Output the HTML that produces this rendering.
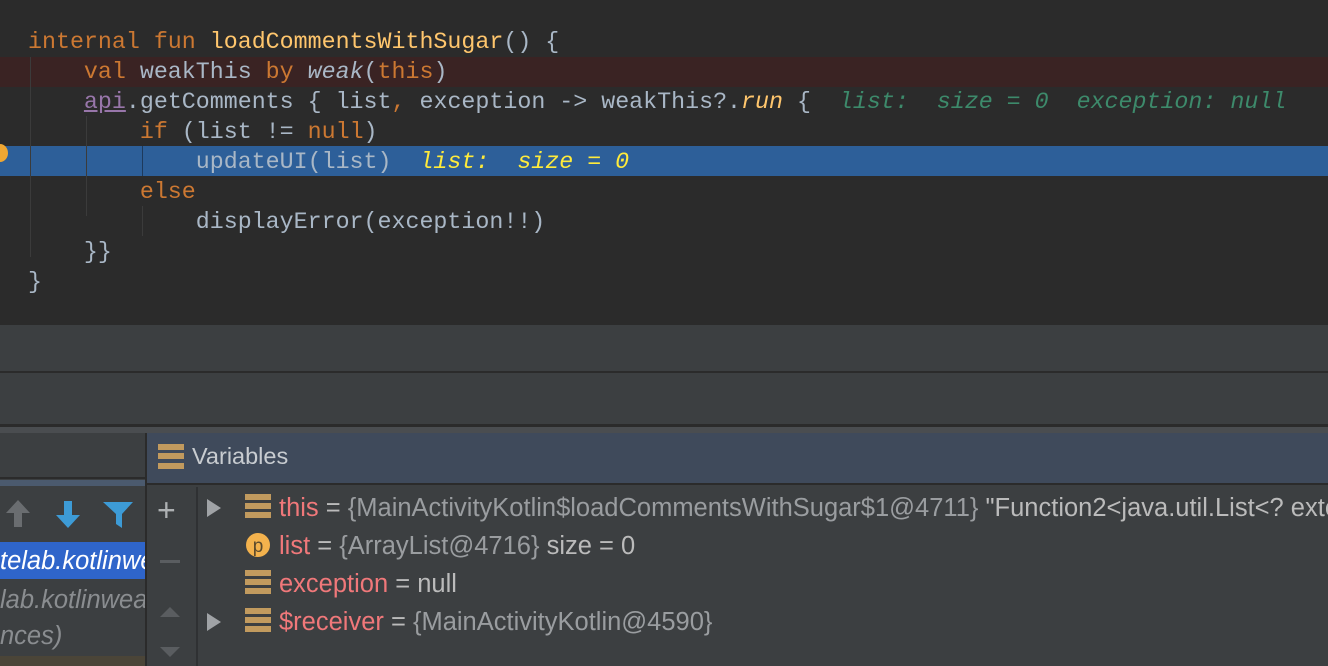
<!DOCTYPE html>
<html><head><meta charset="utf-8"><style>
*{margin:0;padding:0;box-sizing:border-box}
body{width:1328px;height:666px;overflow:hidden;background:#3c3f41;position:relative;font-family:"Liberation Sans",sans-serif}
.ed{position:absolute;left:0;top:0;width:1328px;height:325px;background:#2b2b2b}
.ln{position:absolute;left:28px;height:30px;line-height:30px;font:23.3px/30px "Liberation Mono",monospace;color:#a9b7c6;white-space:pre}
.k{color:#cc7832}.f{color:#ffc66d}.i{font-style:italic}.p{color:#9876aa;text-decoration:underline}
.h{color:#3d8a6b;font-style:italic}.y{color:#ffeb3b;font-style:italic}
.g{position:absolute;width:1px;background:#3b3b3b}
.ab{position:absolute;white-space:nowrap;font-size:25.5px;line-height:30px}
</style></head><body>
<div class="ed">
<div style="position:absolute;left:0;top:57px;width:1328px;height:30px;background:#3a2323"></div>
<div style="position:absolute;left:0;top:146px;width:1328px;height:30px;background:#2d5f99"></div>
<div class="g" style="left:30px;top:57px;height:200px"></div>
<div class="g" style="left:86px;top:116px;height:100px"></div>
<div class="g" style="left:142px;top:146px;height:30px;background:#1e3a5c"></div>
<div class="g" style="left:142px;top:206px;height:30px"></div>
<div style="position:absolute;left:-8px;top:144px;width:16px;height:18px;border-radius:50%;background:#f0a732"></div>
<div class="ln" style="top:27px"><span class="k">internal fun </span><span class="f">loadCommentsWithSugar</span>() {</div>
<div class="ln" style="top:57px">    <span class="k">val </span>weakThis <span class="k">by </span><span class="i">weak</span>(<span class="k">this</span>)</div>
<div class="ln" style="top:87px">    <span class="p">api</span>.getComments { list<span class="k">,</span> exception -&gt; weakThis?.<span class="f i">run</span> {  <span class="h">list:  size = 0  exception: null</span></div>
<div class="ln" style="top:117px">        <span class="k">if </span>(list != <span class="k">null</span>)</div>
<div class="ln" style="top:147px">            updateUI(list)  <span class="y">list:  size = 0</span></div>
<div class="ln" style="top:177px">        <span class="k">else</span></div>
<div class="ln" style="top:207px">            displayError(exception!!)</div>
<div class="ln" style="top:237px">    }}</div>
<div class="ln" style="top:267px">}</div>
</div>
<div style="position:absolute;left:0;top:371px;width:1328px;height:2px;background:#2b2b2b"></div>
<div style="position:absolute;left:0;top:424px;width:1328px;height:3px;background:#2b2b2b"></div>
<div style="position:absolute;left:0;top:427px;width:1328px;height:6px;background:#4a4d50"></div>
<div style="position:absolute;left:0;top:433px;width:145px;height:46px;background:#3c3f41;border-bottom:2px solid #2b2b2b"></div>
<div style="position:absolute;left:0;top:480px;width:145px;height:6px;background:#4b5a6e"></div>
<div style="position:absolute;left:145px;top:433px;width:2px;height:233px;background:#2b2b2b"></div>
<div style="position:absolute;left:147px;top:433px;width:1181px;height:52px;background:#3f4a5b;border-bottom:2px solid #2b2b2b"></div>
<svg style="position:absolute;left:158px;top:444px" width="26" height="26"><rect y="0" width="26" height="6" fill="#c19a5e"/><rect y="9" width="26" height="6" fill="#c19a5e"/><rect y="19" width="26" height="6" fill="#c19a5e"/></svg>
<div class="ab" style="left:192px;top:441px;color:#c8ccd0;font-size:23.5px">Variables</div>
<div style="position:absolute;left:196px;top:487px;width:2px;height:179px;background:#2f3133"></div>
<div class="ab" style="left:157px;top:495px;color:#aeb1b3;font-size:32px">+</div>
<div style="position:absolute;left:160px;top:560px;width:20px;height:3px;background:#5a5d60"></div>
<svg style="position:absolute;left:158px;top:603px" width="24" height="60"><path d="M2 14 L12 4 L22 14Z M2 44 L12 54 L22 44Z" fill="#5a5d60"/></svg>
<svg style="position:absolute;left:0;top:498px" width="145" height="34"><path d="M18 2 L6 15 H14 V29 H22 V15 H30Z" fill="#6a6d70"/><path d="M68 30 L56 17 H64 V3 H72 V17 H80Z" fill="#3d9bd6"/><path d="M103 4 H133 L122 16 V30 L116 26 V16Z" fill="#3d9bd6"/></svg>
<div style="position:absolute;left:0;top:542px;width:145px;height:37px;background:#2f65ca"></div>
<div class="ab" style="left:0;top:546px;color:#fff;font-style:italic;width:145px;overflow:hidden">telab.kotlinweak</div>
<div class="ab" style="left:0;top:585px;color:#8a8d90;font-style:italic;width:145px;overflow:hidden">lab.kotlinweak</div>
<div class="ab" style="left:0;top:621px;color:#8a8d90;font-style:italic">nces)</div>
<div style="position:absolute;left:0;top:656px;width:145px;height:10px;background:#4b4538"></div>
<svg style="position:absolute;left:205px;top:497px" width="20" height="140"><path d="M2 2 L16 11 L2 20Z M2 116 L16 125 L2 134Z" fill="#a0a3a6"/></svg>
<svg style="position:absolute;left:245px;top:494px" width="26" height="140"><g fill="#c19a5e"><rect y="0" width="26" height="6"/><rect y="9" width="26" height="6"/><rect y="18" width="26" height="6"/><rect y="76" width="26" height="6"/><rect y="85" width="26" height="6"/><rect y="94" width="26" height="6"/><rect y="114" width="26" height="6"/><rect y="123" width="26" height="6"/><rect y="132" width="26" height="6"/></g><circle cx="13" cy="51" r="12" fill="#f3b24d"/><text x="13" y="58" font-size="19" text-anchor="middle" fill="#5b4a2c" font-family="Liberation Sans">p</text></svg>
<div class="ab" style="left:279px;top:493px;color:#bbb"><span style="color:#f0787a">this</span> = <span style="color:#9a9da0">{MainActivityKotlin$loadCommentsWithSugar$1@4711}</span> "Function2&lt;java.util.List&lt;? extends</div>
<div class="ab" style="left:279px;top:531px;color:#bbb"><span style="color:#f0787a">list</span> = <span style="color:#9a9da0">{ArrayList@4716}</span>  size = 0</div>
<div class="ab" style="left:279px;top:569px;color:#bbb"><span style="color:#f0787a">exception</span> = null</div>
<div class="ab" style="left:279px;top:607px;color:#bbb"><span style="color:#f0787a">$receiver</span> = <span style="color:#9a9da0">{MainActivityKotlin@4590}</span></div>
</body></html>
